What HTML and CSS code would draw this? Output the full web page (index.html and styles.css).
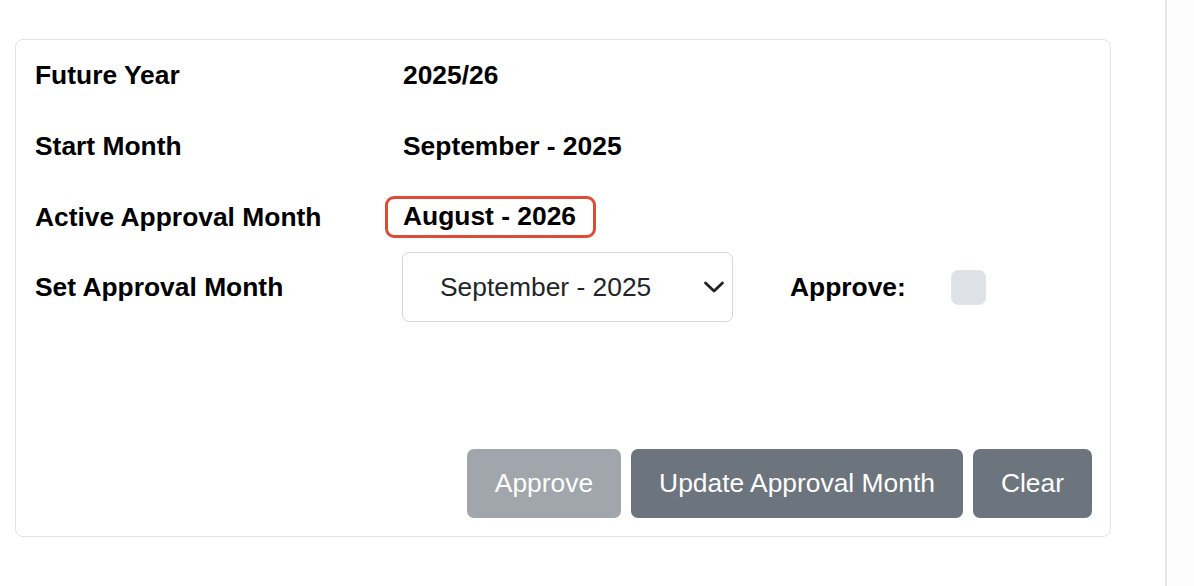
FILE: index.html
```html
<!DOCTYPE html>
<html>
<head>
    <title>Approval Month</title>
    <link rel="stylesheet" href="styles.css">
</head>
<body>
    <div class="page">
        <div class="main">
            <div class="card">
                <div class="row">
                    <div class="label">Future Year</div>
                    <div class="value">2025/26</div>
                </div>
                <div class="row">
                    <div class="label">Start Month</div>
                    <div class="value">September - 2025</div>
                </div>
                <div class="row short">
                    <div class="label">Active Approval Month</div>
                    <div class="value"><span class="highlight">August - 2026</span></div>
                </div>
                <div class="row short">
                    <div class="label">Set Approval Month</div>
                    <div class="select-wrap">
                        <select class="month-select">
                            <option>September - 2025</option>
                        </select>
                        <svg class="chevron" width="22" height="12" viewBox="0 0 22 12">
                            <path d="M2.5 2 L11 10 L19.5 2" fill="none" stroke="#222" stroke-width="2.8" stroke-linecap="round" stroke-linejoin="round"/>
                        </svg>
                    </div>
                    <div class="approve-label">Approve:</div>
                    <span class="check"></span>
                </div>
                <div class="actions">
                    <button class="btn disabled">Approve</button>
                    <button class="btn">Update Approval Month</button>
                    <button class="btn">Clear</button>
                </div>
            </div>
        </div>
        <div class="side"></div>
    </div>
</body>
</html>
```

FILE: styles.css
```css
body {
    margin: 0;
    font-family: "Liberation Sans", Arial, sans-serif;
    color: #000;
    background: #fff;
}
.page {
    display: flex;
    height: 586px;
}
.main {
    width: 1165px;
    padding: 39px 0 0 15px;
    box-sizing: border-box;
}
.side {
    flex: 1;
    border-left: 2px solid #e6e6e6;
    background: #fdfdfd;
}
.card {
    width: 1096px;
    height: 498px;
    box-sizing: border-box;
    border: 1.5px solid #e3e3e3;
    border-radius: 8px;
    padding: 0 18px 18px 19px;
    display: flex;
    flex-direction: column;
}
.row {
    display: flex;
    align-items: center;
    height: 71px;
    flex-shrink: 0;
}
.row.short {
    height: 70px;
}
.label {
    width: 368px;
    font-weight: bold;
    font-size: 26.4px;
}
.value {
    font-weight: bold;
    font-size: 26.4px;
}
.highlight {
    display: inline-block;
    margin-left: -18px;
    padding: 2px 17px 3px 15px;
    border: 3px solid #e04b38;
    border-radius: 9px;
}
.select-wrap {
    position: relative;
    margin-left: -1px;
}
.month-select {
    appearance: none;
    -webkit-appearance: none;
    width: 331px;
    height: 70px;
    padding: 0 0 0 37px;
    border: 1.5px solid #d3d7dc;
    border-radius: 7px;
    background: #fff;
    font-family: "Liberation Sans", Arial, sans-serif;
    font-size: 26.4px;
    color: #212529;
}
.chevron {
    position: absolute;
    right: 8px;
    top: 29px;
    pointer-events: none;
}
.approve-label {
    margin-left: 57px;
    font-weight: bold;
    font-size: 26.4px;
}
.check {
    display: inline-block;
    width: 35px;
    height: 35px;
    margin-left: 45px;
    background: #dee2e6;
    border: 1px solid #e4e7ea;
    border-radius: 7px;
    box-sizing: border-box;
}
.actions {
    margin-top: auto;
    display: flex;
    justify-content: flex-end;
    gap: 10px;
}
.btn {
    height: 69px;
    padding: 0 28px;
    border: none;
    border-radius: 7px;
    background: #6c757d;
    color: #fff;
    font-family: "Liberation Sans", Arial, sans-serif;
    font-size: 26.4px;
}
.btn.disabled {
    background: #a1a6ac;
}
```
